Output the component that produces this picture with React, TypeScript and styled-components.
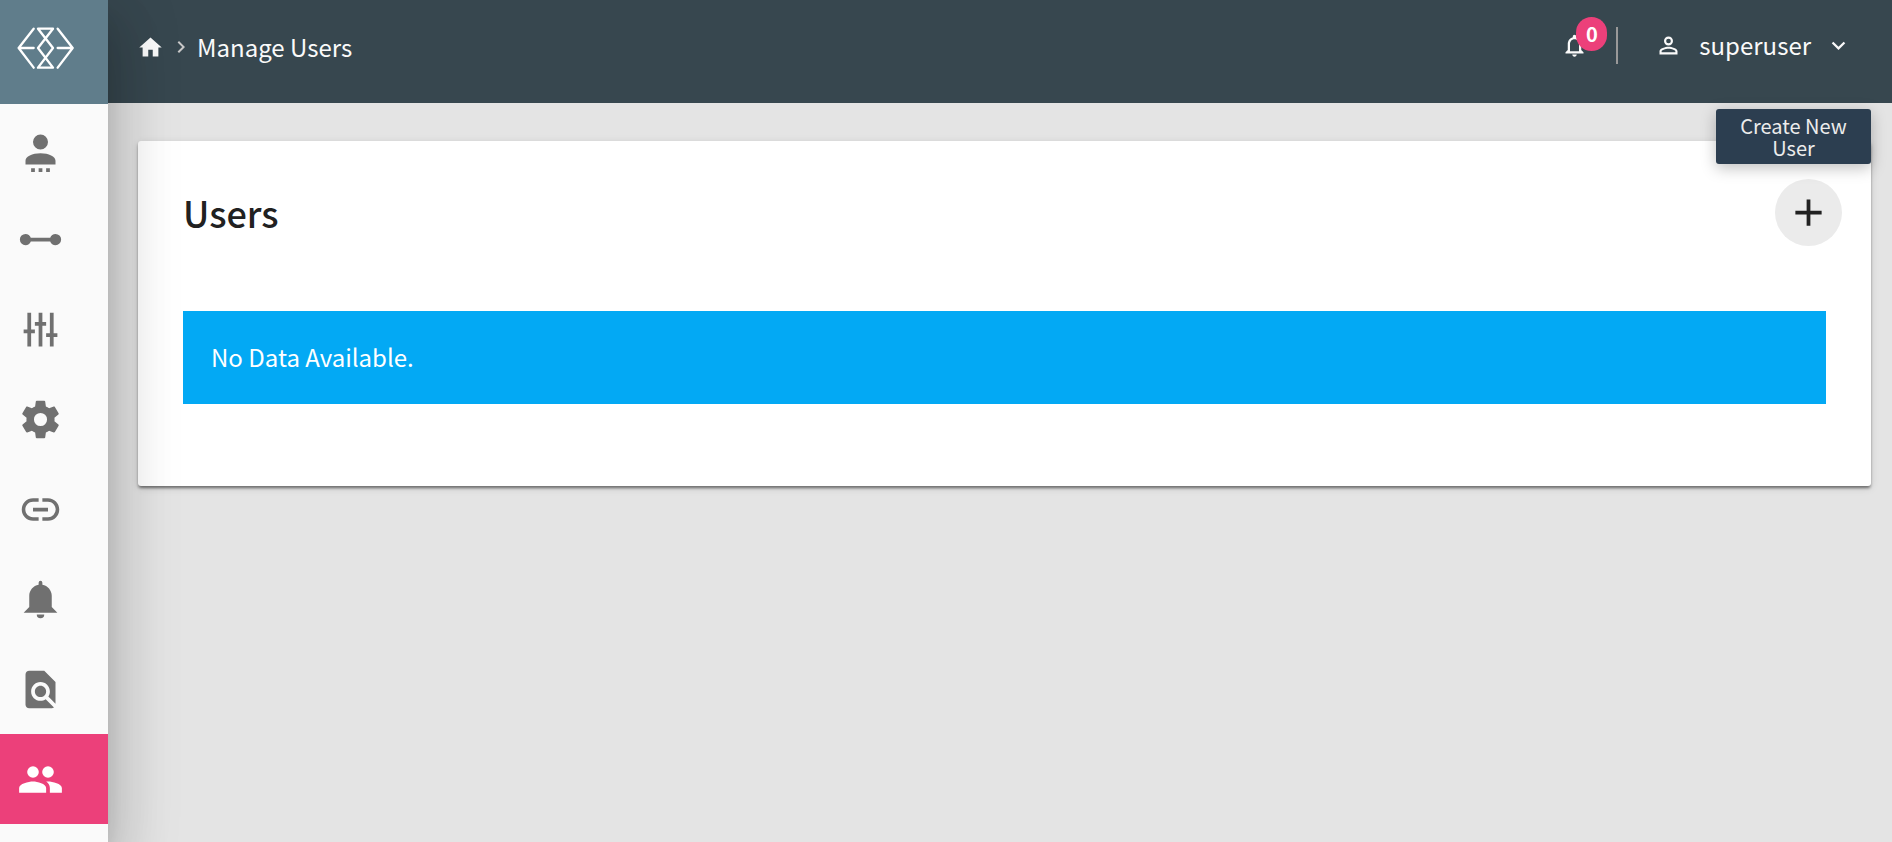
import React from "react";
import styled, { createGlobalStyle } from "styled-components";

const GlobalStyle = createGlobalStyle`
  *, *::before, *::after { box-sizing: border-box; }
  body {
    margin: 0;
    background: #e4e4e4;
    color: #212121;
    font-family: "Noto Sans CJK SC", "Open Sans", sans-serif;
    font-size: 24px;
    line-height: 32px;
  }
  button { font: inherit; color: inherit; border: 0; background: none; padding: 0; cursor: pointer; }
  a { color: inherit; text-decoration: none; }
`;

const Shell = styled.div`
  display: flex;
  min-height: 100vh;
`;

const Sidebar = styled.aside`
  position: sticky;
  top: 0;
  z-index: 2;
  flex: 0 0 108px;
  height: 100vh;
  background: #fafafa;
  box-shadow: 0 17px 23px -11px rgba(0, 0, 0, 0.2), 0 36px 57px 5px rgba(0, 0, 0, 0.14),
    0 14px 69px 12px rgba(0, 0, 0, 0.12);
`;

const Brand = styled.a`
  display: flex;
  height: 104px;
  padding: 27px 17px;
  background: #607d8b;
`;

const NavList = styled.ul`
  margin: 0;
  padding: 0;
  list-style: none;
`;

const NavLink = styled.a<{ $active?: boolean }>`
  display: flex;
  align-items: center;
  height: 90px;
  padding-left: 18px;
  color: ${(p) => (p.$active ? "#fff" : "#707070")};
  background: ${(p) => (p.$active ? "#ec407a" : "transparent")};
`;

const Main = styled.div`
  flex: 1;
  min-width: 0;
`;

const TopBar = styled.header`
  display: flex;
  justify-content: space-between;
  align-items: flex-start;
  height: 103px;
  padding: 0 40px 0 29px;
  background: #37474f;
  color: #fafafa;
`;

const Breadcrumb = styled.nav`
  display: flex;
  align-items: center;
  height: 94px;
`;

const HomeLink = styled.a`
  display: flex;
  margin-right: 5px;
`;

const Separator = styled.span`
  display: flex;
  margin-right: 4px;
  color: #c8c8c8;
`;

const Account = styled.div`
  display: flex;
  align-items: center;
  height: 90px;
`;

const BellButton = styled.button`
  position: relative;
  display: flex;
`;

const Badge = styled.span`
  position: absolute;
  left: 15px;
  bottom: 8px;
  width: 31px;
  height: 34px;
  border-radius: 16px;
  background: #ec407a;
  color: #fff;
  font-size: 20px;
  font-weight: 700;
  line-height: 34px;
  text-align: center;
`;

const Divider = styled.span`
  width: 2px;
  height: 37px;
  margin: 0 37px 0 28px;
  background: #999;
`;

const UserButton = styled.button`
  display: flex;
  align-items: center;
  gap: 17px;
  text-align: left;
`;

const UserName = styled.span`
  display: flex;
  align-items: center;
  gap: 14px;
`;

const Content = styled.main`
  padding: 38px 21px 38px 30px;
`;

const Card = styled.section`
  padding: 38px 45px 82px;
  border-radius: 3px;
  background: #fff;
  box-shadow: 0 3px 3px -1px rgba(0, 0, 0, 0.35), 0 2px 3px 0 rgba(0, 0, 0, 0.2),
    0 2px 8px 0 rgba(0, 0, 0, 0.12);
`;

const CardHead = styled.div`
  display: flex;
  align-items: center;
  justify-content: space-between;
  margin: 0 -16px 65px 0;
`;

const Title = styled.h1`
  margin: 0;
  padding-bottom: 2px;
  font-size: 36px;
  font-weight: 500;
  line-height: 48px;
`;

const AddWrap = styled.div`
  position: relative;
`;

const AddButton = styled.button`
  display: flex;
  align-items: center;
  justify-content: center;
  width: 67px;
  height: 67px;
  border-radius: 50%;
  background: #ebebeb;
`;

const Tooltip = styled.div`
  position: absolute;
  right: -29px;
  bottom: calc(100% + 15px);
  width: 155px;
  padding: 6px 12px 5px;
  border-radius: 3px;
  background: #2c3e50;
  color: #ececec;
  font-size: 20px;
  line-height: 22px;
  text-align: center;
  box-shadow: 0 4px 15px rgba(0, 0, 0, 0.25);
`;

const Notice = styled.p`
  margin: 0;
  padding: 30px 28px 31px;
  background: #03a9f4;
  color: #fff;
`;

const icons = {
  userDots:
    "M12 4a4 4 0 1 1 0 8 4 4 0 0 1 0-8zM12 14c4.420 0 8 1.790 8 4v2H4v-2c0-2.210 3.580-4 8-4zM7 22h2v2H7zM11 22h2v2h-2zM15 22h2v2h-2z",
  ray: "M4 9C5.310 9 6.420 9.830 6.830 11H17.170C17.580 9.830 18.690 9 20 9A3 3 0 0 1 20 15C18.690 15 17.580 14.170 17.170 13H6.830C6.420 14.170 5.310 15 4 15A3 3 0 0 1 4 9Z",
  tune: "M5 3V12H3V14H5V21H7V14H9V12H7V3zM11 3V8H9V10H11V21H13V10H15V8H13V3zM17 3V14H15V16H17V21H19V16H21V14H19V3z",
  settings:
    "M12,15.5A3.5,3.5 0 0,1 8.5,12A3.5,3.5 0 0,1 12,8.5A3.5,3.5 0 0,1 15.5,12A3.5,3.5 0 0,1 12,15.5M19.43,12.97C19.47,12.65 19.5,12.33 19.5,12C19.5,11.67 19.47,11.34 19.43,11L21.54,9.37C21.73,9.22 21.78,8.95 21.66,8.73L19.66,5.27C19.54,5.05 19.27,4.96 19.05,5.05L16.56,6.05C16.04,5.66 15.5,5.32 14.87,5.07L14.5,2.42C14.46,2.18 14.25,2 14,2H10C9.75,2 9.54,2.18 9.5,2.42L9.13,5.07C8.5,5.32 7.96,5.66 7.44,6.05L4.95,5.05C4.73,4.96 4.46,5.05 4.34,5.27L2.34,8.73C2.21,8.95 2.27,9.22 2.46,9.37L4.57,11C4.53,11.34 4.5,11.67 4.5,12C4.5,12.33 4.53,12.65 4.57,12.97L2.46,14.63C2.27,14.78 2.21,15.05 2.34,15.27L4.34,18.73C4.46,18.95 4.73,19.03 4.95,18.95L7.44,17.94C7.96,18.34 8.5,18.68 9.13,18.93L9.5,21.58C9.54,21.82 9.75,22 10,22H14C14.25,22 14.46,21.82 14.5,21.58L14.87,18.93C15.5,18.67 16.04,18.34 16.56,17.94L19.05,18.95C19.27,19.03 19.54,18.95 19.66,18.73L21.66,15.27C21.78,15.05 21.73,14.78 21.54,14.63L19.43,12.97Z",
  link: "M16,6H13V7.9H16C18.26,7.9 20.1,9.73 20.1,12A4.1,4.1 0 0,1 16,16.1H13V18H16A6,6 0 0,0 22,12C22,8.68 19.31,6 16,6M3.9,12C3.9,9.73 5.74,7.9 8,7.9H11V6H8A6,6 0 0,0 2,12A6,6 0 0,0 8,18H11V16.1H8C5.74,16.1 3.9,14.26 3.9,12M8,13H16V11H8V13Z",
  bell: "M14,20A2,2 0 0,1 12,22A2,2 0 0,1 10,20H14M12,2A1,1 0 0,1 13,3V4.08C15.84,4.56 18,7.03 18,10V16L21,19H3L6,16V10C6,7.03 8.16,4.56 11,4.08V3A1,1 0 0,1 12,2Z",
  findInPage:
    "M20 19.59V8l-6-6H6c-1.1 0-1.99.9-1.99 2L4 20c0 1.100.89 2 1.990 2H18c.45 0 .85-.15 1.190-.4l-4.430-4.430c-.8.52-1.740.83-2.760.83-2.760 0-5-2.240-5-5s2.240-5 5-5 5 2.240 5 5c0 1.020-.31 1.960-.83 2.750L20 19.590zM9 13c0 1.660 1.340 3 3 3s3-1.340 3-3-1.340-3-3-3-3 1.340-3 3z",
  people:
    "M16 13C15.710 13 15.380 13 15.030 13.050C16.190 13.890 17 15 17 16.500V19H23.400V16.500C23.400 14.170 18.330 13 16 13M8 13C5.670 13 .6 14.170 .6 16.500V19H15V16.500C15 14.170 10.330 13 8 13M8 11.100A3.100 3.100 0 0 0 8 4.900A3.100 3.100 0 0 0 8 11.100M16 11.100A3.100 3.100 0 0 0 16 4.900A3.100 3.100 0 0 0 16 11.100Z",
  home: "M10 20v-6h4v6h5v-8h3L12 3 2 12h3v8z",
  chevronRight: "M10 6L8.590 7.410 13.170 12l-4.580 4.590L10 18l6-6z",
  chevronDown: "M7.410 8.590L12 13.170l4.590-4.580L18 10l-6 6-6-6z",
  bellOutline:
    "M12 22c1.100 0 2-.9 2-2h-4c0 1.100.9 2 2 2zm6-6v-5c0-3.070-1.630-5.640-4.500-6.320V4c0-.83-.67-1.500-1.500-1.500s-1.500.67-1.500 1.500v.68C7.640 5.360 6 7.920 6 11v5l-2 2v1h16v-1l-2-2zm-2 1H8v-6c0-2.480 1.510-4.500 4-4.500s4 2.020 4 4.500v6z",
  personOutline:
    "M12 5.900a2.100 2.100 0 1 1 0 4.200 2.100 2.100 0 0 1 0-4.200m0 9c2.970 0 6.100 1.460 6.100 2.100v1.100H5.900V17c0-.64 3.130-2.100 6.100-2.100M12 4C9.790 4 8 5.790 8 8s1.790 4 4 4 4-1.790 4-4-1.790-4-4-4zm0 9c-2.670 0-8 1.340-8 4v3h16v-3c0-2.660-5.330-4-8-4z",
  plus: "M19 13h-6v6h-2v-6H5v-2h6V5h2v6h6v2z",
};

type IconName = keyof typeof icons;

function Icon({ name, size }: { name: IconName; size: number }) {
  return (
    <svg width={size} height={size} viewBox="0 0 24 24" fill="currentColor" overflow="visible" aria-hidden="true">
      <path d={icons[name]} />
    </svg>
  );
}

function Logo() {
  return (
    <svg
      width="57"
      height="42"
      viewBox="51 81 171 126"
      fill="none"
      stroke="#fff"
      strokeWidth="7"
      strokeLinecap="round"
      strokeLinejoin="round"
      aria-hidden="true"
    >
      <path d="M101 86L56 144L101 203M56 144H101" />
      <path d="M173 86L218 144L173 203M218 144H173" />
      <path d="M114 86H159L114 144L159 203H114L159 144Z" />
    </svg>
  );
}

const navItems: { label: string; icon: IconName; active?: boolean }[] = [
  { label: "Accounts", icon: "userDots" },
  { label: "Connections", icon: "ray" },
  { label: "Controls", icon: "tune" },
  { label: "Settings", icon: "settings" },
  { label: "Links", icon: "link" },
  { label: "Alerts", icon: "bell" },
  { label: "Audit", icon: "findInPage" },
  { label: "Manage Users", icon: "people", active: true },
];

export default function App() {
  return (
    <>
      <GlobalStyle />
      <Shell>
        <Sidebar>
          <Brand href="#" aria-label="Dashboard">
            <Logo />
          </Brand>
          <nav aria-label="Main">
            <NavList>
              {navItems.map((item) => (
                <li key={item.label}>
                  <NavLink
                    href="#"
                    aria-label={item.label}
                    aria-current={item.active ? "page" : undefined}
                    $active={item.active}
                  >
                    <Icon name={item.icon} size={45} />
                  </NavLink>
                </li>
              ))}
            </NavList>
          </nav>
        </Sidebar>
        <Main>
          <TopBar>
            <Breadcrumb aria-label="Breadcrumb">
              <HomeLink href="#" aria-label="Home">
                <Icon name="home" size={27} />
              </HomeLink>
              <Separator>
                <Icon name="chevronRight" size={24} />
              </Separator>
              <span>Manage Users</span>
            </Breadcrumb>
            <Account>
              <BellButton type="button" aria-label="Notifications">
                <Icon name="bellOutline" size={27} />
                <Badge>0</Badge>
              </BellButton>
              <Divider />
              <UserButton type="button">
                <Icon name="personOutline" size={27} />
                <UserName>
                  superuser
                  <Icon name="chevronDown" size={27} />
                </UserName>
              </UserButton>
            </Account>
          </TopBar>
          <Content>
            <Card>
              <CardHead>
                <Title>Users</Title>
                <AddWrap>
                  <AddButton type="button" aria-label="Create New User">
                    <Icon name="plus" size={45} />
                  </AddButton>
                  <Tooltip role="tooltip">Create New User</Tooltip>
                </AddWrap>
              </CardHead>
              <Notice>No Data Available.</Notice>
            </Card>
          </Content>
        </Main>
      </Shell>
    </>
  );
}
